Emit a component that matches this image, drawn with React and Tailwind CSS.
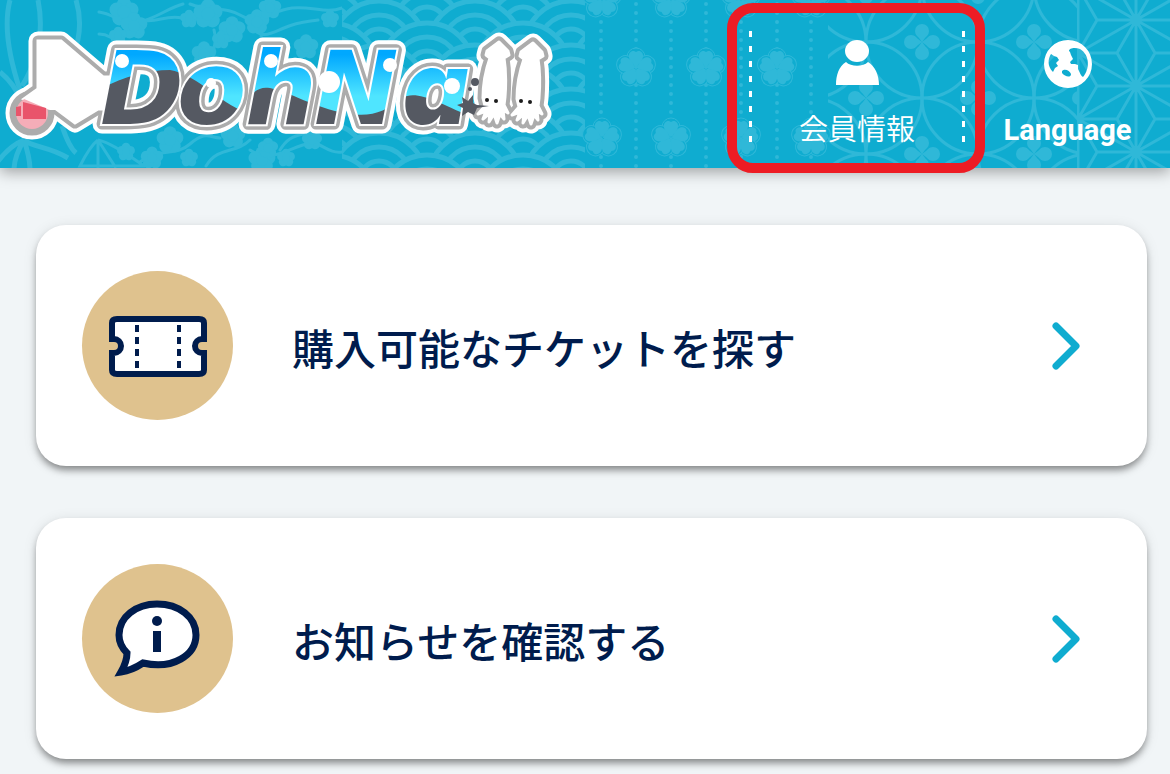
const PATTERN = "#2fb8d8";
const HEADER = "#0facd0";

// Sakura branches
function Blossom({ x, y, r }) {
  return (
    <g transform={`translate(${x} ${y})`} fill={PATTERN}>
      {[0, 72, 144, 216, 288].map((a) => (
        <circle key={a} r={r * 0.55} cy={-r * 0.6} transform={`rotate(${a})`} />
      ))}
      <circle r={r * 0.5} />
    </g>
  );
}

function Branches() {
  const blossoms = [
    [124, 12, 13], [134, 26, 12], [189, 19, 8], [208, 14, 13], [232, 30, 12], [221, 40, 8],
    [204, 54, 11], [257, 22, 11], [306, 47, 11], [330, 19, 8], [270, 8, 10], [118, 36, 8],
    [170, 140, 12], [189, 158, 8], [126, 152, 8], [233, 136, 11], [262, 160, 12],
    [268, 148, 9], [312, 140, 9], [286, 158, 8], [152, 158, 10],
  ];
  return (
    <g>
      <g fill="none" stroke={PATTERN} strokeWidth="3" strokeLinecap="round">
        <path d="M99 12c16 2 20 12 38 10s30-14 46-18M142 20c14 4 24-6 40-2M99 34c14 0 20 12 36 22M190 4c20 8 36 2 52 12s30-6 50-8 34 6 50 0M250 26c12 14 20 8 34 2s22-6 34-8M262 30c-4 16 6 26 14 36M214 30c6 20-10 26 4 40" />
        <path d="M140 162c20-16 34-4 50-18s20-6 30-6M206 166c12-20 30-12 44-26M250 150c20 14 40-2 56-6s20 10 36 8M280 150c6-10 12-14 24-16" />
      </g>
      {blossoms.map(([x, y, r]) => (
        <Blossom key={`${x}-${y}`} x={x} y={y} r={r} />
      ))}
    </g>
  );
}

// Overlapping wave fans
function Waves() {
  const rows = [-2, -1, 0, 1, 2, 3, 4, 5, 6, 7];
  const cols = [-1, 0, 1, 2, 3];
  return rows.map((row) =>
    cols.map((col) => {
      const cx = 331 + col * 96 + (row % 2 ? 48 : 0);
      const cy = 70 + row * 22;
      return (
        <g key={`${row}-${col}`} fill={HEADER} stroke={PATTERN} strokeWidth="5">
          <circle cx={cx} cy={cy} r="47" />
          <circle cx={cx} cy={cy} r="33" />
          <circle cx={cx} cy={cy} r="19" />
        </g>
      );
    })
  );
}

function Flower({ x, y }) {
  const turns = [0, 72, 144, 216, 288];
  return (
    <g transform={`translate(${x} ${y})`}>
      {turns.map((a) => (
        <circle key={a} r="9" cy="-11" fill={HEADER} stroke={PATTERN} strokeWidth="1" transform={`rotate(${a})`} />
      ))}
      {turns.map((a) => (
        <path key={a} d="M0-1C-12-11-6-18-2-17L0-16 2-17C6-18 12-11 0-1Z" fill={PATTERN} transform={`rotate(${a})`} />
      ))}
    </g>
  );
}

// Hemp leaf grid: every triangle of the lattice is joined to its centre
function hempLeaf() {
  let d = "";
  for (let c = -1; c < 3; c++) {
    for (let r = -2; r < 5; r++) {
      const x = 1078 + c * 58;
      const y = 20 + r * 66 + (c % 2 ? 0 : 33);
      d += `M${x} ${y}v66M${x} ${y}l58 33M${x} ${y}l58-33`;
      d += `M${x} ${y}l19 33 39 0M${x} ${y + 66}l19-33`;
      d += `M${x} ${y}h39l19-33M${x + 39} ${y}l19 33`;
    }
  }
  return d;
}

function HeaderPattern() {
  const lines = [601, 636, 671, 706, 741, 777, 811];
  return (
    <svg className="h-full w-full" aria-hidden="true">
      <defs>
        <clipPath id="waves"><rect x="342" width="243" height="168" /></clipPath>
        <clipPath id="rings"><rect x="828" width="250" height="168" /></clipPath>
        <clipPath id="hemp"><rect x="1077" width="400" height="168" /></clipPath>
        <clipPath id="leaves"><rect width="145" height="168" /></clipPath>
        <pattern id="ring" x="866" y="-14" width="112" height="112" patternUnits="userSpaceOnUse">
          <g fill="none" stroke={PATTERN} strokeWidth="3">
            <circle cx="56" cy="56" r="56" />
            <circle cx="0" cy="0" r="56" />
            <circle cx="112" cy="0" r="56" />
            <circle cx="0" cy="112" r="56" />
            <circle cx="112" cy="112" r="56" />
          </g>
          {[[56, 56], [0, 0], [112, 0], [0, 112], [112, 112]].map(([x, y]) => (
            <g key={`${x}-${y}`} fill={PATTERN}>
              <circle cx={x - 11} cy={y} r="7" />
              <circle cx={x + 11} cy={y} r="7" />
              <circle cx={x} cy={y - 11} r="7" />
              <circle cx={x} cy={y + 11} r="7" />
              <path d={`M${x} ${y}l-8 6v-12l16 12v-12zM${x} ${y}l6-8h-12l12 16h-12z`} />
            </g>
          ))}
        </pattern>
      </defs>

      <g clipPath="url(#leaves)" fill="none" stroke={PATTERN} strokeWidth="5">
        <path d="M10 0C2 30 12 66 20 90M38 0c6 30 0 60-16 86M76 0c8 26 2 54-14 74" />
        <path d="M24 140c10 8 24 6 44 18M24 140C18 150 14 160 14 170M24 140c4 12 6 20 6 30M24 140C14 144 6 150-4 164M62 126c4 12 8 22 14 27M0 72c10 8 16 16 22 30" />
        <path d="M98 140v28M98 140c-8 6-14 18-18 26h64c-14-10-34-24-46-26M98 140l18 28" strokeWidth="3" />
      </g>
      <Branches />
      <g clipPath="url(#waves)"><Waves /></g>

      {lines.map((x) => (
        <path key={x} d={`M${x} 4V168`} stroke={PATTERN} strokeWidth="4" strokeLinecap="round" strokeDasharray="0 9" />
      ))}
      {[602, 671, 741, 811].map((x) => (
        <g key={x}>
          <Flower x={x} y={-1} />
          <Flower x={x} y={138} />
        </g>
      ))}
      {[636, 706, 777].map((x) => <Flower key={x} x={x} y={68} />)}

      <rect x="828" width="250" height="168" fill="url(#ring)" clipPath="url(#rings)" />
      <path d={hempLeaf()} fill="none" stroke={PATTERN} strokeWidth="3" clipPath="url(#hemp)" />
    </svg>
  );
}

const SQUID =
  "M499 42L487 51 486 55 490 58C485 72 483 86 483 98L485 106 478 114 486 111 483 119 490 113 489 122 494 114 497 123 500 114 504 119 503 110 508 113 504 105 505 97C506 84 506 70 504 58L509 55 508 51Z";
const TAIL = "M38 41H61L103 77H112V109H98L75 123 55 108H45L24 99 38 89Z";

function LogoText() {
  return (
    <text
      x="100 177 245 314 403"
      y="124"
      fontSize="101"
      className="font-['DejaVu_Sans',sans-serif] font-bold italic"
    >
      DohN
      <tspan className="font-[Inter,sans-serif] font-black [font-feature-settings:'cv11']">a</tspan>
    </text>
  );
}

function LogoLayer({ color, width }) {
  return (
    <g fill={color} stroke={color} strokeWidth={width} strokeLinejoin="round">
      <path d={TAIL} />
      <circle cx="32" cy="113" r="17" />
      <path d={SQUID} />
      <path d={SQUID} transform="translate(34 1)" />
      <LogoText />
    </g>
  );
}

function Logo() {
  return (
    <svg viewBox="0 0 570 168" className="h-[168px] w-[570px] shrink-0" role="img" aria-label="DohNa!!">
      <defs>
        <linearGradient id="sky" x1="0" y1="50" x2="0" y2="96" gradientUnits="userSpaceOnUse">
          <stop offset="0.1" stopColor="#00a8ff" />
          <stop offset="1" stopColor="#4fe5ff" />
        </linearGradient>
        <clipPath id="word"><LogoText /></clipPath>
      </defs>
      <LogoLayer color="#ffffff" width="19" />
      <LogoLayer color="#acacac" width="11" />
      <g fill="#ffffff" stroke="#ffffff" strokeWidth="4">
        <LogoText />
      </g>
      <path d={TAIL} fill="#ffffff" stroke="#ffffff" strokeWidth="3" />
      <circle cx="32" cy="113" r="16" fill="#f5adb8" />
      <path d="M38 89L24 99 50 110H60L70 80Z" fill="#ffffff" />
      <path d="M16 107l5-1v10h-5zM23 102l23 6v11H23z" fill="#e9546b" />

      <g clipPath="url(#word)">
        <rect x="90" y="40" width="400" height="100" fill="url(#sky)" />
        <path
          d="M90 94C120 78 145 70 170 70C195 74 215 98 240 110C252 92 258 86 270 88C290 92 315 108 345 113C370 118 385 112 402 98C420 88 445 108 490 124V140H90Z"
          fill="#555962"
        />
      </g>
      <g fill="#ffffff">
        <circle cx="122" cy="61" r="7" />
        <circle cx="211" cy="83" r="5" />
        <circle cx="271" cy="61" r="7" />
        <circle cx="329" cy="82" r="11" />
        <circle cx="390" cy="65" r="7" />
        <circle cx="452" cy="86" r="8" />
      </g>

      <g fill="#ffffff" stroke="#ffffff" strokeWidth="3" strokeLinejoin="round">
        <path d={SQUID} />
        <path d={SQUID} transform="translate(34 1)" />
      </g>
      <g fill="#555962">
        <path d="M462 97l6 4 5-6v8l4 2 12 1-12 2-3 7-6-3-6 4 1-8-6-3 6-2z" />
        <circle cx="475" cy="82" r="4" />
        <circle cx="470" cy="89" r="2" />
      </g>
      <g fill="#1c1c1c">
        <circle cx="487" cy="100" r="2" />
        <circle cx="496" cy="101" r="2" />
        <circle cx="521" cy="101" r="2" />
        <circle cx="530" cy="102" r="2" />
      </g>
    </svg>
  );
}

function PersonIcon() {
  return (
    <svg viewBox="0 0 44 46" className="h-[46px] w-11" fill="#ffffff" aria-hidden="true">
      <ellipse cx="22" cy="12" rx="12" ry="11" />
      <path d="M11 23C16 28 28 28 33 23C40 27 44 36 44 46H1C1 36 4 27 11 23Z" />
    </svg>
  );
}

function GlobeIcon() {
  return (
    <svg viewBox="0 0 48 48" className="size-12" aria-hidden="true">
      <path
        fill="#ffffff"
        fillRule="evenodd"
        d="M24 0a24 24 0 1 1 0 48a24 24 0 1 1 0-48ZM25 11C25 8 31 7 36 9C46 15 46 29 39 37C37 36 36 33 34 29L34 25 31 24H27L26 22 29 19 27 15 26 12ZM7 14L10 16 13 17 15 20 12 23 14 26 11 28 9 32C3 26 4 19 7 14ZM18 31C21 28 26 31 27 34C27 38 21 37 18 33Z"
      />
    </svg>
  );
}

function TicketIcon() {
  return (
    <svg viewBox="0 0 100 64" className="h-16 w-[100px]" aria-hidden="true">
      <path
        d="M9 5H91Q96 5 96 9V25H94A7 7 0 0 0 94 39H96V56Q96 60 91 60H9Q4 60 4 56V39H6A7 7 0 0 0 6 25H4V9Q4 5 9 5Z"
        fill="#ffffff"
        stroke="#001c4d"
        strokeWidth="6"
      />
      <path d="M29 11V55M71 11V55" stroke="#001c4d" strokeWidth="4" strokeDasharray="7 5" />
    </svg>
  );
}

function InfoIcon() {
  return (
    <svg viewBox="0 0 84 78" className="h-[78px] w-21 overflow-visible" aria-hidden="true">
      <path
        d="M41 4C20 4 3 17 3 35C3 43 6 48 11 53C11 60 9 65 5 72C12 71 21 67 27 63C57 70 80 55 80 35C80 17 63 4 41 4Z"
        fill="#ffffff"
        stroke="#001c4d"
        strokeWidth="7"
      />
      <circle cx="41" cy="21" r="5" fill="#001c4d" />
      <path d="M37 31h8v21h-8z" fill="#001c4d" />
    </svg>
  );
}

function Divider() {
  return (
    <span className="h-28 w-[3px] bg-[repeating-linear-gradient(to_bottom,white_0px,white_6px,transparent_6px,transparent_15px)]" />
  );
}

function Header() {
  return (
    <header className="relative z-10 h-42 bg-[#0facd0] shadow-[0_4px_14px_rgba(0,0,0,0.35)]">
      <div className="absolute inset-0 overflow-hidden">
        <HeaderPattern />
      </div>
      <div className="relative flex h-full justify-between">
        <a href="#top" className="shrink-0">
          <Logo />
        </a>
        <nav className="flex text-white">
          <div className="relative flex w-[216px] justify-between pt-[31px]">
            <Divider />
            <button type="button" className="flex flex-col items-center gap-6 self-start pt-2">
              <PersonIcon />
              <span className="text-[29px] leading-9 font-[350]">会員情報</span>
            </button>
            <Divider />
            <span className="pointer-events-none absolute top-[3px] -right-5 -left-[22px] h-[170px] rounded-[26px] border-10 border-[#ed1c24]" />
          </div>
          <button type="button" className="flex w-[205px] flex-col items-center gap-6 self-start pt-10">
            <GlobeIcon />
            <span className="font-[Roboto,sans-serif] text-[29px] leading-9 font-bold">Language</span>
          </button>
        </nav>
      </div>
    </header>
  );
}

function MenuCard({ icon, label, href }) {
  return (
    <a
      href={href}
      className="flex h-[241px] items-center rounded-[30px] bg-white pr-[67px] pl-[46px] shadow-[0_5px_7px_-1px_rgba(0,0,0,0.4),0_2px_14px_rgba(0,0,0,0.1)]"
    >
      <span className="flex h-[149px] w-[151px] shrink-0 items-center justify-center rounded-[50%] bg-[#dfc28e]">
        {icon}
      </span>
      <span className="ml-[59px] flex-1 pt-0.5 text-[42px] leading-14 font-medium text-[#001c4d]">{label}</span>
      <svg viewBox="0 0 28 48" className="h-12 w-7" aria-hidden="true">
        <path d="M4 4L24 24 4 44" fill="none" stroke={HEADER} strokeWidth="7" strokeLinecap="round" strokeLinejoin="round" />
      </svg>
    </a>
  );
}

export default function App() {
  return (
    <div id="top" lang="ja" className="min-h-screen bg-[#f1f5f7] font-['Noto_Sans_CJK_JP',sans-serif]">
      <Header />
      <main className="flex flex-col gap-13 pt-[57px] pr-[23px] pb-[15px] pl-9">
        <MenuCard icon={<TicketIcon />} label="購入可能なチケットを探す" href="#tickets" />
        <MenuCard icon={<InfoIcon />} label="お知らせを確認する" href="#news" />
      </main>
    </div>
  );
}
